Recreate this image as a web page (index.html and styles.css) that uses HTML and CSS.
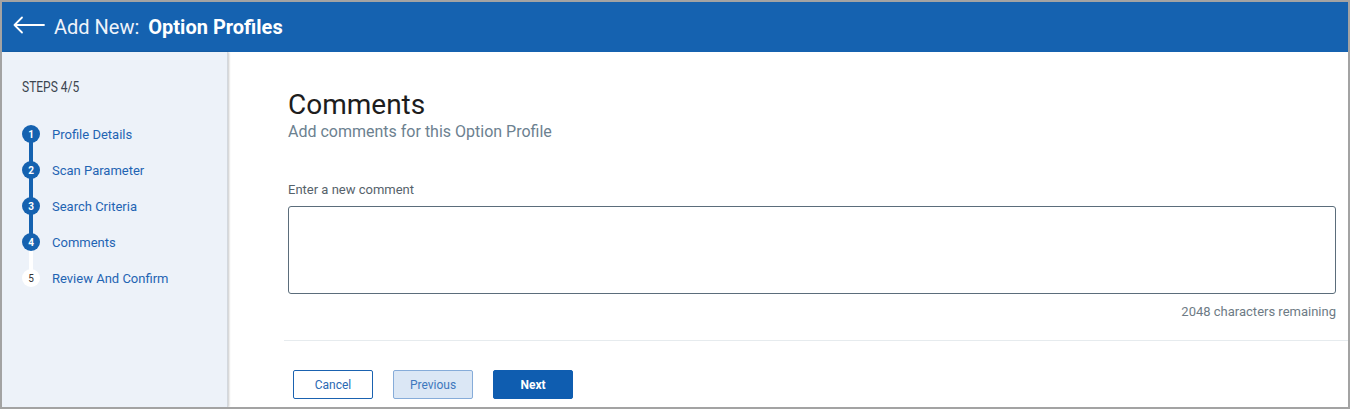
FILE: index.html
```html
<!DOCTYPE html>
<html lang="en">
<head>
<meta charset="utf-8">
<title>Add New: Option Profiles</title>
<link rel="stylesheet" href="styles.css">
</head>
<body>
<div class="frame">
  <header class="topbar">
    <svg class="back" width="32" height="20" viewBox="0 0 32 20" aria-hidden="true">
      <path d="M1.5 10 H31 M9 2.5 L1.5 10 L9 17.5" fill="none" stroke="#fff" stroke-width="1.8" stroke-linecap="round" stroke-linejoin="round"/>
    </svg>
    <h1 class="title"><span class="title-light">Add New:</span><span class="title-bold">Option Profiles</span></h1>
  </header>
  <div class="main">
    <aside class="sidebar">
      <div class="steps-label"><span>STEPS 4/5</span></div>
      <ol class="steps">
        <li class="step done"><span class="num">1</span><span class="step-text">Profile Details</span></li>
        <li class="step done"><span class="num">2</span><span class="step-text">Scan Parameter</span></li>
        <li class="step done"><span class="num">3</span><span class="step-text">Search Criteria</span></li>
        <li class="step current"><span class="num">4</span><span class="step-text">Comments</span></li>
        <li class="step todo"><span class="num">5</span><span class="step-text">Review And Confirm</span></li>
      </ol>
    </aside>
    <section class="content">
      <div class="form">
        <h2 class="heading">Comments</h2>
        <p class="subheading">Add comments for this Option Profile</p>
        <label class="field-label" for="comment">Enter a new comment</label>
        <textarea id="comment" class="comment-box"></textarea>
        <div class="counter">2048 characters remaining</div>
      </div>
      <div class="divider"></div>
      <div class="actions">
        <button class="btn btn-cancel">Cancel</button>
        <button class="btn btn-prev">Previous</button>
        <button class="btn btn-next">Next</button>
      </div>
    </section>
  </div>
</div>
</body>
</html>
```

FILE: styles.css
```css
* { box-sizing: border-box; }

html, body {
  margin: 0;
  padding: 0;
  background: #ffffff;
}

body {
  font-family: Roboto, "Liberation Sans", Arial, sans-serif;
}

.frame {
  width: 1350px;
  height: 409px;
  border: 2px solid #a3a3a3;
  display: flex;
  flex-direction: column;
  overflow: hidden;
  background: #fff;
}

.topbar {
  height: 50px;
  flex: none;
  background: #1562b0;
  display: flex;
  align-items: center;
  padding-left: 11px;
}

.back {
  display: block;
  margin-top: -4px;
}

.title {
  margin: 0 0 0 9px;
  font-size: 20px;
  line-height: 24px;
  color: #fff;
  font-weight: 400;
  white-space: pre;
}

.title-light { color: #eef3fa; }
.title-bold { font-weight: 700; margin-left: 9px; }

.main {
  flex: 1;
  display: flex;
  min-height: 0;
}

.sidebar {
  width: 225px;
  flex: none;
  background: #edf2f9;
  box-shadow: 1px 0 0 #d3d8de, 2px 0 2px rgba(0,0,0,0.22);
  position: relative;
  z-index: 1;
  padding: 25px 0 0 20px;
}

.steps-label {
  height: 20px;
  line-height: 20px;
  font-size: 15px;
  color: #3c4650;
}

.steps-label span {
  display: inline-block;
  transform: scaleX(0.8);
  transform-origin: left center;
}

.steps {
  list-style: none;
  margin: 19px 0 0 0;
  padding: 0;
}

.step {
  position: relative;
  height: 36px;
  display: flex;
  align-items: center;
}

.num {
  width: 18px;
  height: 18px;
  border-radius: 50%;
  background: #1562b0;
  color: #fff;
  font-size: 10px;
  font-weight: 700;
  display: flex;
  align-items: center;
  justify-content: center;
  flex: none;
  position: relative;
  z-index: 1;
}

.step.todo .num {
  background: #fff;
  color: #333;
  font-weight: 400;
}

.step.done::after,
.step.current::after {
  content: "";
  position: absolute;
  left: 7px;
  top: 18px;
  width: 4px;
  height: 36px;
  background: #1562b0;
}

.step.current::after { background: #ffffff; }

.step-text {
  margin-left: 12px;
  font-size: 13px;
  color: #1f64b3;
}

.content {
  flex: 1;
  padding: 37px 0 0 57px;
  display: flex;
  flex-direction: column;
}

.form {
  padding: 0 12px 0 4px;
}

.heading {
  margin: 0;
  font-size: 28px;
  line-height: 32px;
  font-weight: 400;
  color: #1d1d1d;
}

.subheading {
  margin: 1px 0 0 0;
  font-size: 16px;
  line-height: 19px;
  color: #6c8190;
}

.field-label {
  display: block;
  margin-top: 41px;
  font-size: 13px;
  line-height: 16px;
  color: #56626b;
}

.comment-box {
  display: block;
  width: 100%;
  height: 88px;
  margin-top: 8px;
  border: 1px solid #5b6d7b;
  border-radius: 3px;
  resize: none;
  font-family: inherit;
  outline: none;
}

.counter {
  margin-top: 10px;
  text-align: right;
  font-size: 13px;
  line-height: 16px;
  color: #6e7b85;
}

.divider {
  height: 1px;
  background: #e6ebee;
  margin-top: 20px;
}

.actions {
  display: flex;
  gap: 20px;
  padding-left: 9px;
  margin-top: 29px;
}

.btn {
  width: 80px;
  height: 29px;
  border-radius: 2px;
  font-family: inherit;
  font-size: 12px;
  padding: 0;
  cursor: pointer;
}

.btn-cancel {
  background: #fff;
  border: 1px solid #1a62b0;
  color: #2a69b3;
}

.btn-prev {
  background: #dbe7f5;
  border: 1px solid #86acd9;
  color: #3e78bd;
}

.btn-next {
  background: #0f5db0;
  border: 1px solid #0f5db0;
  color: #fff;
  font-weight: 700;
}
```
